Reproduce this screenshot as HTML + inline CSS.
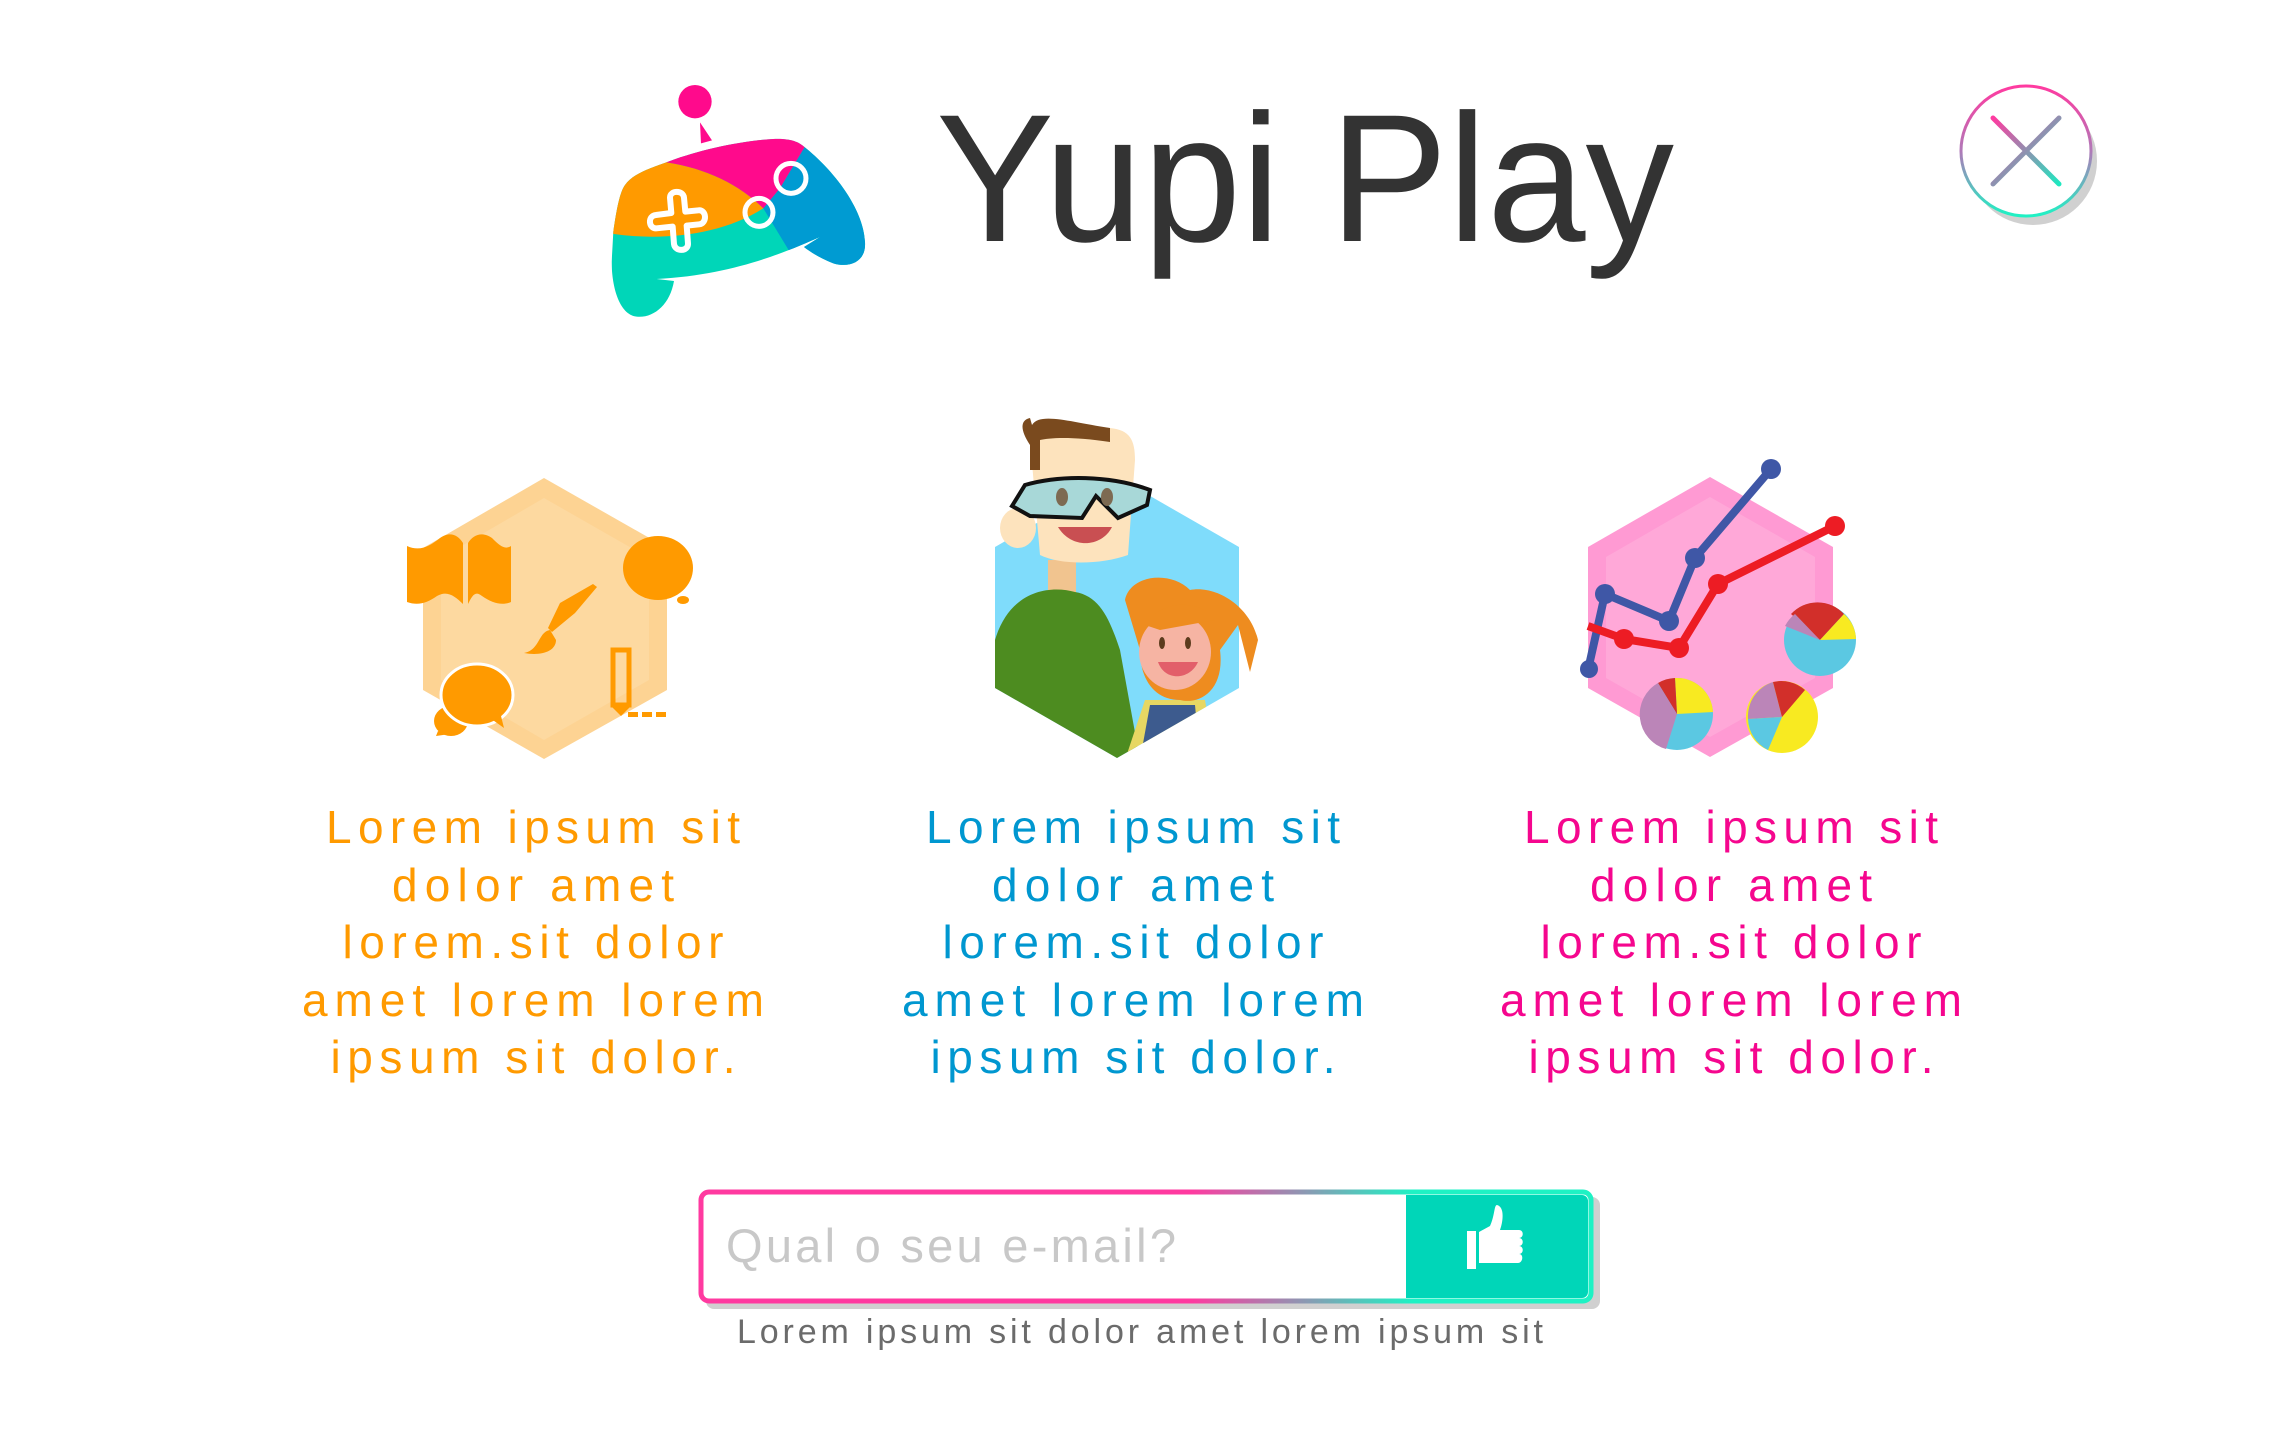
<!DOCTYPE html>
<html><head><meta charset="utf-8"><style>
html,body{margin:0;padding:0;background:#fff;}
svg{display:block}
</style></head><body>
<svg width="2280" height="1440" viewBox="0 0 2280 1440" xmlns="http://www.w3.org/2000/svg">
<defs>
<linearGradient id="cg" x1="0" y1="0" x2="0" y2="1"><stop offset="0" stop-color="#ff3aa0"/><stop offset="0.5" stop-color="#b079b8"/><stop offset="1" stop-color="#1ef2c4"/></linearGradient>
<linearGradient id="xg" x1="0" y1="0" x2="1" y2="1"><stop offset="0" stop-color="#ff3aa0"/><stop offset="1" stop-color="#1ee8c0"/></linearGradient>
<linearGradient id="bg" x1="0" y1="0" x2="1" y2="0"><stop offset="0.55" stop-color="#ff3aa0"/><stop offset="0.8" stop-color="#1ef2c4"/></linearGradient>
<clipPath id="body"><path d="M40,470 C50,400 60,350 75,330 C100,295 150,280 210,258 C300,225 420,198 520,192 C570,190 595,200 612,215 C700,285 790,400 795,500 C800,560 750,580 700,565 C660,550 630,530 612,516 L660,486 C560,530 400,600 170,612 L222,618 C210,690 160,730 110,725 C60,720 35,640 35,560 Z"/></clipPath>
<clipPath id="bhex"><polygon points="1117,477 1239,547 1239,688 1117,758 995,688 995,547"/><rect x="995" y="400" width="280" height="150"/></clipPath>
</defs>

<!-- Controller logo -->
<g transform="translate(600,75) scale(0.3333)">
<circle cx="285" cy="80" r="50" fill="#ff0a8c"/>
<path d="M300,142 L303,205 L336,196 Z" fill="#ff0a8c"/>
<g clip-path="url(#body)">
<rect x="0" y="150" width="850" height="600" fill="#00d6b8"/>
<path d="M0,150 L200,150 L200,262 C320,280 420,330 490,400 C350,490 150,500 0,470 Z" fill="#ff9a00"/>
<path d="M200,150 L200,262 C320,280 420,330 490,400 L540,340 L615,215 L615,150 Z" fill="#ff0a8c"/>
<path d="M615,150 L615,215 L540,340 L490,400 L572,535 L850,760 L850,150 Z" fill="#009bd2"/>
</g>
<path d="M210,368 C210,345 250,345 252,368 L256,410 L296,406 C320,404 322,445 298,448 L260,452 L264,505 C266,530 225,532 222,507 L218,455 L170,460 C145,462 142,422 168,420 L214,414 Z" fill="none" stroke="#fff" stroke-width="18" stroke-linejoin="round"/>
<circle cx="477" cy="412" r="42" fill="none" stroke="#fff" stroke-width="15"/>
<circle cx="573" cy="310" r="45" fill="none" stroke="#fff" stroke-width="15"/>
</g>

<!-- Title -->
<text x="936" y="241" font-family="Liberation Sans, sans-serif" font-size="182" fill="#333" textLength="738" lengthAdjust="spacingAndGlyphs">Yupi Play</text>

<!-- Close -->
<circle cx="2033" cy="161" r="64" fill="#d0d0d0"/>
<circle cx="2026" cy="151" r="65" fill="#fff" stroke="url(#cg)" stroke-width="3"/>
<path d="M1993,118 L2059,184 M2059,118 L1993,184" stroke="url(#xg)" stroke-width="5" stroke-linecap="round"/>

<!-- Orange hex -->
<polygon points="544,478 667,548 667,690 544,759 423,690 423,548" fill="#fdd393"/>
<polygon points="544,498 649,558 649,680 544,740 441,680 441,558" fill="#fdd9a0"/>
<g fill="#ff9a00">
<path d="M407,546 C420,552 430,546 440,538 C450,531 458,535 463,543 L463,604 C455,596 447,590 437,596 C427,603 418,606 407,602Z"/>
<path d="M468,543 C473,535 482,531 492,538 C500,546 505,550 511,546 L511,602 C502,606 492,603 482,596 C475,590 472,596 468,604Z"/>
<ellipse cx="658" cy="568" rx="35" ry="32"/>
<ellipse cx="683" cy="600" rx="6" ry="4"/>
<path d="M597,587 L593,584 L560,603 L548,628 L552,632 L575,613Z"/>
<path d="M550,630 C538,632 540,650 524,653 C540,656 556,652 556,640Z"/>
<ellipse cx="451" cy="721" rx="17" ry="15"/>
<path d="M438,731 L436,736 L450,734Z"/>
<ellipse cx="477" cy="695" rx="36" ry="31" stroke="#fff" stroke-width="3"/>
<path d="M490,718 L504,728 L500,712Z"/>
<rect x="613" y="650" width="16" height="55" fill="none" stroke="#ff9a00" stroke-width="5"/>
<path d="M611,706 L631,706 L621,716Z"/>
<rect x="628" y="712" width="10" height="5"/><rect x="642" y="712" width="10" height="5"/><rect x="656" y="712" width="10" height="5"/>
</g>

<!-- Blue hex with people -->
<polygon points="1117,477 1239,547 1239,688 1117,758 995,688 995,547" fill="#7fdcfb"/>
<g clip-path="url(#bhex)">
<rect x="1048" y="560" width="28" height="60" fill="#f1c48f"/>
<path d="M995,640 C1010,590 1050,585 1075,592 C1100,596 1110,620 1120,650 L1140,760 L995,760Z" fill="#4d8c20"/>
<path d="M1125,760 L1145,700 L1205,700 L1215,760Z" fill="#e7d763"/>
<path d="M1140,760 L1150,705 L1195,705 L1200,760Z" fill="#3d5b8e"/>
</g>
<path d="M1030,440 C1030,420 1060,424 1110,428 C1130,430 1135,440 1135,460 L1128,555 C1100,565 1060,565 1040,555 Z" fill="#fde3bd"/>
<path d="M1030,445 C1020,430 1020,420 1030,418 L1032,425 C1040,412 1070,422 1110,428 L1110,442 C1070,436 1050,438 1040,440 L1040,470 L1030,470 Z" fill="#7a4a1e"/>
<ellipse cx="1018" cy="528" rx="18" ry="20" fill="#fde3bd"/>
<path d="M1012,506 L1025,485 C1060,475 1110,475 1150,490 L1147,505 L1118,518 L1096,496 L1082,518 L1030,516 Z" fill="#a8d8d8" stroke="#111" stroke-width="4"/>
<ellipse cx="1062" cy="497" rx="6" ry="9" fill="#7d6a52"/>
<ellipse cx="1107" cy="497" rx="6" ry="9" fill="#7d6a52"/>
<path d="M1058,527 C1072,550 1102,547 1112,527 Z" fill="#c94f52"/>
<path d="M1125,600 C1130,575 1170,570 1190,590 C1215,585 1250,605 1258,640 L1250,672 L1238,625 L1220,650 C1225,690 1200,705 1180,700 C1155,700 1140,680 1140,650 Z" fill="#ee8c1f"/>
<ellipse cx="1175" cy="652" rx="36" ry="38" fill="#f6b4a3"/>
<path d="M1145,625 C1160,600 1200,598 1215,620 L1160,630 Z" fill="#ee8c1f"/>
<ellipse cx="1162" cy="643" rx="3" ry="6" fill="#5c3b1d"/><ellipse cx="1188" cy="643" rx="3" ry="6" fill="#5c3b1d"/>
<path d="M1158,662 C1165,682 1190,680 1198,662 Z" fill="#e25f6a"/>

<!-- Pink hex -->
<polygon points="1710,477 1833,547 1833,688 1710,757 1588,688 1588,547" fill="#ff9ad3"/>
<polygon points="1710,497 1815,557 1815,678 1710,737 1606,678 1606,557" fill="#ffa8d8"/>
<polyline points="1588,670 1605,594 1669,621 1695,558 1771,469" fill="none" stroke="#3f57a6" stroke-width="8"/>
<g fill="#3f57a6"><circle cx="1589" cy="669" r="9"/><circle cx="1605" cy="594" r="10"/><circle cx="1669" cy="621" r="10"/><circle cx="1695" cy="558" r="10"/><circle cx="1771" cy="469" r="10"/></g>
<polyline points="1588,626 1624,639 1679,648 1718,584 1835,526" fill="none" stroke="#ed1c24" stroke-width="8"/>
<g fill="#ed1c24"><circle cx="1624" cy="639" r="10"/><circle cx="1679" cy="648" r="10"/><circle cx="1718" cy="584" r="10"/><circle cx="1835" cy="526" r="10"/></g>
<g>
<circle cx="1820" cy="640" r="36" fill="#5bc8e2"/>
<path d="M1820,640 L1791,614 A36,36 0 0 1 1844,614Z" fill="#d22f2a"/>
<path d="M1820,640 L1844,614 A36,36 0 0 1 1856,639Z" fill="#f8ea21"/>
<path d="M1820,640 L1785,626 A36,36 0 0 1 1795,614Z" fill="#bb85b8"/>
<circle cx="1677" cy="714" r="36" fill="#5bc8e2"/>
<path d="M1677,714 L1675,678 A36,36 0 0 1 1713,712Z" fill="#f8ea21"/>
<path d="M1677,714 L1658,683 A36,36 0 0 1 1675,678Z" fill="#d22f2a"/>
<path d="M1677,714 L1666,749 A36,36 0 0 1 1658,683Z" fill="#bb85b8"/>
<circle cx="1782" cy="717" r="36" fill="#f8ea21"/>
<path d="M1782,717 L1748,719 A36,36 0 0 1 1773,682Z" fill="#bb85b8"/>
<path d="M1782,717 L1773,682 A36,36 0 0 1 1805,690Z" fill="#d22f2a"/>
<path d="M1782,717 L1768,750 A36,36 0 0 1 1748,719Z" fill="#5bc8e2"/>
</g>

<!-- Column texts -->
<g font-family="Liberation Sans, sans-serif" font-size="46" text-anchor="middle">
<g fill="#ff9a00">
<text x="533" y="843" textLength="414" lengthAdjust="spacing">Lorem ipsum sit</text>
<text x="533" y="901" textLength="282" lengthAdjust="spacing">dolor amet</text>
<text x="533" y="958" textLength="381" lengthAdjust="spacing">lorem.sit dolor</text>
<text x="533" y="1016" textLength="462" lengthAdjust="spacing">amet lorem lorem</text>
<text x="533" y="1073" textLength="405" lengthAdjust="spacing">ipsum sit dolor.</text>
</g>
<g fill="#0097d0">
<text x="1133" y="843" textLength="414" lengthAdjust="spacing">Lorem ipsum sit</text>
<text x="1133" y="901" textLength="282" lengthAdjust="spacing">dolor amet</text>
<text x="1133" y="958" textLength="381" lengthAdjust="spacing">lorem.sit dolor</text>
<text x="1133" y="1016" textLength="462" lengthAdjust="spacing">amet lorem lorem</text>
<text x="1133" y="1073" textLength="405" lengthAdjust="spacing">ipsum sit dolor.</text>
</g>
<g fill="#f5068e">
<text x="1731" y="843" textLength="414" lengthAdjust="spacing">Lorem ipsum sit</text>
<text x="1731" y="901" textLength="282" lengthAdjust="spacing">dolor amet</text>
<text x="1731" y="958" textLength="381" lengthAdjust="spacing">lorem.sit dolor</text>
<text x="1731" y="1016" textLength="462" lengthAdjust="spacing">amet lorem lorem</text>
<text x="1731" y="1073" textLength="405" lengthAdjust="spacing">ipsum sit dolor.</text>
</g>
</g>

<!-- Email box -->
<rect x="706" y="1197" width="894" height="112" rx="8" fill="#d0d0d0"/>
<rect x="701" y="1192" width="890" height="109" rx="8" fill="#fff" stroke="url(#bg)" stroke-width="5"/>
<path d="M1406,1195 L1582,1195 A6,6 0 0 1 1588,1201 L1588,1292 A6,6 0 0 1 1582,1298 L1406,1298Z" fill="#00d6b8"/>
<g fill="#fff">
<rect x="1467" y="1231" width="9" height="38"/>
<path d="M1479,1232 L1490,1226 C1495,1215 1494,1205 1497,1205 C1505,1207 1503,1222 1500,1230 L1519,1230 C1524,1230 1524,1238 1519,1238 C1524,1238 1524,1246 1519,1246 C1524,1246 1524,1254 1519,1254 C1524,1254 1523,1263 1518,1263 L1479,1263Z"/>
</g>
<text x="726" y="1262" font-family="Liberation Sans, sans-serif" font-size="47" fill="#c8c8c8" textLength="450" lengthAdjust="spacing">Qual o seu e-mail?</text>
<text x="1140" y="1343" font-family="Liberation Sans, sans-serif" font-size="34" fill="#6b6b6b" text-anchor="middle" textLength="806" lengthAdjust="spacing">Lorem ipsum sit dolor amet lorem ipsum sit</text>
</svg>
</body></html>
